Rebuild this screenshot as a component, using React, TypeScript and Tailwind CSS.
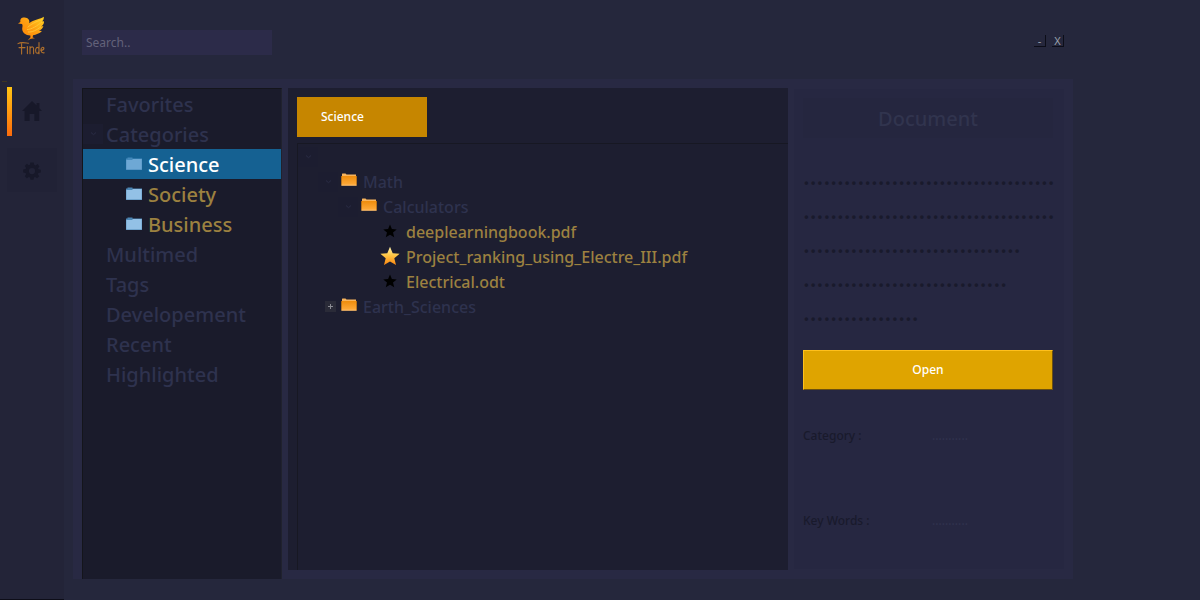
import React from 'react';

type TreeItem = { label: string; child?: boolean; selected?: boolean; open?: boolean };

const categories: TreeItem[] = [
  { label: 'Favorites' },
  { label: 'Categories', open: true },
  { label: 'Science', child: true, selected: true },
  { label: 'Society', child: true },
  { label: 'Business', child: true },
  { label: 'Multimed' },
  { label: 'Tags' },
  { label: 'Developement' },
  { label: 'Recent' },
  { label: 'Highlighted' },
];

const summaryDots = [37, 37, 32, 30, 17];

function Logo() {
  return (
    <svg viewBox="0 0 30 42" className="h-[42px] w-[30px]" role="img" aria-label="Finde">
      <defs>
        <linearGradient id="bird" x1="0" y1="1" x2="1" y2="0">
          <stop offset="0" stopColor="#ff7a00" />
          <stop offset="0.55" stopColor="#fea012" />
          <stop offset="1" stopColor="#ffd21f" />
        </linearGradient>
      </defs>
      <path
        fill="url(#bird)"
        d="M1 8.4 3.4 7C2.8 3.6 5 2.4 7.6 2.6 11 2.8 13 5 12.2 8.2 14.4 6.4 17 5.2 20 4.4 23 3.8 25.4 3 26.8 1.8 27 3.6 26.4 5.4 25 6.6L27 6.2C27.2 8.6 26 10.4 24.2 11.4L26.4 11C25.6 13.6 24 15 22 15.8L25 16C22.6 18.6 19 19.6 16 20.2L15.6 22.4 18 23.2 13.6 23.8 10.6 25.4 13.4 22.6 13.4 20.4C8.6 20.2 5 17.4 5.2 13.4 5.4 11.6 6 10.4 5 9Z"
      />
      <path
        fill="none"
        stroke="#ffcb3e"
        strokeWidth="0.8"
        d="M10 14.6C15 14.2 20 11 25.4 6.6M11 17C15 17.4 20 15 24 11.6M10.6 12.4C14 9.2 18 7.2 25 4.4"
      />
      <g fill="none" stroke="#b0702c" strokeWidth="1.1" strokeLinecap="round" strokeLinejoin="round">
        <path d="M1 28.6C4 26.8 8 27.8 11.6 28.2M4.6 28V39M2 32.6H8" />
        <path d="M10.4 31.6V38.6" />
        <path d="M13 38.8V31.6M13 33.4C15 30.8 16.8 31.8 16.6 34.4V38.8" />
        <path d="M22 27.6V38.8M22 33.4C19.8 31 18.4 33.4 18.6 35.8 18.8 39 21 39 22 36.4" />
        <path d="M23.8 35.6C28.2 34.8 27.2 31.6 25.2 32.4 23 33.8 23.6 38.4 27.2 37.8" />
      </g>
    </svg>
  );
}

function HomeIcon() {
  return (
    <svg viewBox="0 0 20 20" className="size-5" aria-hidden="true">
      <path fill="#171829" d="M10 0 0 10H2.6V20H7.6V13H12.4V20H17.2V10H20L17.4 7.2V2H14.6V4.5Z" />
    </svg>
  );
}

function GearIcon() {
  return (
    <svg viewBox="0 0 20 20" className="size-5" aria-hidden="true">
      <path
        fill="#171829"
        fillRule="evenodd"
        d="M8.3 1.4H11.7L12.2 3.8 13.5 4.4 15.6 3.1 17.4 5.4 16 7.2 16.4 8.3 18.8 8.8V11.6L16.4 12 15.8 13.3 17.2 15.3 15.1 17.3 13.2 15.9 12 16.4 11.5 18.7H8.5L8 16.4 6.8 15.9 4.8 17.3 2.8 15.2 4.1 13.2 3.6 12 1.2 11.6V8.6L3.6 8.1 4.1 6.9 2.8 4.9 4.9 2.8 6.8 4.2 7.9 3.7ZM10 7A3.1 3.1 0 1 0 10 13.2 3.1 3.1 0 0 0 10 7Z"
      />
    </svg>
  );
}

function BlueFolder({ dim }: { dim?: boolean }) {
  return (
    <svg viewBox="0 0 16 13" className="mr-1.5 mb-0.5 h-[13px] w-4 shrink-0" aria-hidden="true">
      <path fill={dim ? '#4489bb' : '#4c86b4'} d="M0 1.5H1.5V0.5H6.5V1.5H16V13H0Z" />
      <path fill={dim ? '#6ea8d5' : '#93c1e6'} d="M0.3 3H6L7 2H15.7V12.5H0.3Z" />
    </svg>
  );
}

function OrangeFolder() {
  return (
    <svg viewBox="0 0 16 13" className="mr-1.5 mb-1 h-[13px] w-4 shrink-0" aria-hidden="true">
      <defs>
        <linearGradient id="folder" x1="0" y1="0" x2="0" y2="1">
          <stop offset="0" stopColor="#ee8c0c" />
          <stop offset="1" stopColor="#ffac3e" />
        </linearGradient>
      </defs>
      <path fill="#f8b45c" d="M1 1Q1 0.5 1.5 0.5H4.5L5.5 1.5H15V4H1Z" />
      <rect x="0.3" y="3" width="15.4" height="9.6" rx="0.6" fill="url(#folder)" />
      <path stroke="#ffc274" strokeWidth="0.9" d="M0.5 12.2H15.5" />
      <path stroke="#b96f10" strokeWidth="0.5" d="M0.3 3V12M15.7 3V12" />
    </svg>
  );
}

function Star({ lit }: { lit?: boolean }) {
  return (
    <span className="mr-1.5 flex w-5 shrink-0 justify-center">
      <svg
        viewBox="0 0 20 20"
        className={lit ? 'mb-0.5 size-5' : 'mb-0.5 size-[14px]'}
        aria-hidden="true"
      >
        <defs>
          <linearGradient id="star" x1="0" y1="0" x2="0" y2="1">
            <stop offset="0" stopColor="#fff3b0" />
            <stop offset="0.45" stopColor="#ffc847" />
            <stop offset="1" stopColor="#fb850f" />
          </linearGradient>
        </defs>
        <path
          fill={lit ? 'url(#star)' : '#000000'}
          d="M10 0.8 12.7 7.2 19.6 7.8 14.3 12.3 16 19.1 10 15.4 4 19.1 5.7 12.3 0.4 7.8 7.3 7.2Z"
        />
      </svg>
    </span>
  );
}

function Chevron() {
  return (
    <svg viewBox="0 0 20 20" className="size-5 shrink-0" aria-hidden="true">
      <rect width="20" height="20" fill="#1c1d30" />
      <path d="M8 8.5 10.5 10.7 13 8.5" fill="none" stroke="#2a2c45" strokeWidth="1" />
    </svg>
  );
}

function Plus() {
  return (
    <span className="flex size-5 shrink-0 items-center justify-end pr-0.5">
      <svg viewBox="0 0 11 11" className="size-[11px]" aria-hidden="true">
        <rect width="11" height="11" fill="#2a2b38" />
        <path d="M3 5.5H8M5.5 3V8" stroke="#8a8b92" strokeWidth="1" />
      </svg>
    </span>
  );
}

function FolderRow({ label, open }: { label: string; open?: boolean }) {
  return (
    <button type="button" className="flex h-[25px] w-full items-center text-[#2e324e]">
      {open ? <Chevron /> : <Plus />}
      <span className="w-[3px]" />
      <OrangeFolder />
      {label}
    </button>
  );
}

function FileRow({ label, lit }: { label: string; lit?: boolean }) {
  return (
    <button type="button" className="flex h-[25px] w-full items-center text-[#9c8140]">
      <Star lit={lit} />
      {label}
    </button>
  );
}

export default function App() {
  return (
    <div className="flex min-h-screen bg-[#25273c] font-['Noto_Sans',sans-serif] text-xs">
      <nav className="flex w-16 shrink-0 flex-col items-center border-b border-[#0d0d18] bg-[#232438]">
        <div className="flex h-[81px] w-full justify-center pt-[15px]">
          <Logo />
        </div>
        <div className="ml-0.5 h-px w-[5px] self-start bg-[#3d3423]" />
        <button
          type="button"
          aria-label="Home"
          className="mt-[5px] flex h-[49px] w-[50px] items-center"
        >
          <span className="h-full w-[5px] bg-linear-to-b from-[#ffc414] to-[#fb6a0c]" />
          <span className="mb-0.5 ml-2.5">
            <HomeIcon />
          </span>
        </button>
        <button
          type="button"
          aria-label="Settings"
          className="mt-3 flex h-11 w-[50px] items-center justify-center bg-[#212236] pt-0.5"
        >
          <GearIcon />
        </button>
      </nav>

      <div className="flex max-w-[1009px] min-w-0 flex-1 flex-col pb-[21px] pl-[9px]">
        <header className="flex h-[79px] items-start justify-between pr-[9px] pl-[9px]">
          <input
            type="search"
            aria-label="Search"
            placeholder="Search.."
            className="mt-[30px] h-[25px] w-[190px] bg-[#2c2b49] px-1 text-[#8b8a9c] outline-none placeholder:text-[#63627a]"
          />
          <div className="mt-[35px] flex gap-1.5 text-[11px] leading-none text-[#9aa0aa]">
            <button
              type="button"
              aria-label="Minimize"
              className="flex size-3 items-center justify-center border-r border-b border-[#0c0d18]"
            >
              -
            </button>
            <button
              type="button"
              aria-label="Close"
              className="flex size-3 items-center justify-center border-r border-b border-[#0c0d18]"
            >
              X
            </button>
          </div>
        </header>

        <main className="flex flex-1 bg-[#282943] pt-[9px] pl-[9px]">
          <aside className="w-[200px] shrink-0 border border-b-0 border-t-[#14151b] border-r-[#20222e] border-l-[#14151b] bg-[#1a1b2b] text-xl font-medium">
            {categories.map((item) => (
              <button
                type="button"
                key={item.label}
                className={
                  'flex h-[30px] w-full items-center ' +
                  (item.selected
                    ? 'bg-[#156192] text-white'
                    : item.child
                      ? 'text-[#9c8140]'
                      : 'text-[#2e324e]')
                }
              >
                {item.child ? (
                  <>
                    <span className="w-[43px]" />
                    <BlueFolder dim={item.selected} />
                  </>
                ) : (
                  <span className="w-[23px]">{item.open && <Chevron />}</span>
                )}
                <span className="pt-0.5">{item.label}</span>
              </button>
            ))}
          </aside>

          <section className="mr-1.5 mb-[9px] ml-1.5 flex min-w-0 flex-1 flex-col bg-[#1d1e30] pt-[9px] pl-[9px]">
            <button
              type="button"
              className="h-10 w-[130px] bg-[#c68600] pl-6 text-left font-medium text-white"
            >
              Science
            </button>
            <div className="mt-1.5 flex-1 border-t border-l border-[#171823] text-base font-medium">
              <div className="flex h-[25px] items-center">
                <Chevron />
              </div>
              <div className="pl-5">
                <FolderRow label="Math" open />
                <div className="pl-5">
                  <FolderRow label="Calculators" open />
                  <div className="pl-[42px]">
                    <FileRow label="deeplearningbook.pdf" />
                    <FileRow label="Project_ranking_using_Electre_III.pdf" lit />
                    <FileRow label="Electrical.odt" />
                  </div>
                </div>
                <FolderRow label="Earth_Sciences" />
              </div>
            </div>
          </section>

          <section className="mt-px mr-[9px] mb-2.5 w-[270px] shrink-0 bg-[#262741] px-[9px] pt-[9px] font-medium text-[#191a2c]">
            <h2 className="flex h-10 w-[250px] items-center justify-center bg-[#25263f] pt-0.5 text-xl text-[#31344e]">
              Document
            </h2>
            <div className="mt-5 text-[25px] leading-[34px]">
              {summaryDots.map((count, i) => (
                <p key={i} className="whitespace-nowrap">
                  {'.'.repeat(count)}
                </p>
              ))}
            </div>
            <button
              type="button"
              className="mt-[22px] flex h-10 w-[250px] items-center justify-center border border-t-[#ffc01c] border-r-[#6b5010] border-b-[#6b5010] border-l-[#ffc01c] bg-[#dfa400] text-white"
            >
              Open
            </button>
            <dl className="mt-[37px] grid grid-cols-[129px_1fr] gap-y-[67px] leading-[18px]">
              <dt>Category :</dt>
              <dd className="text-[#30324d]">...........</dd>
              <dt>Key Words :</dt>
              <dd className="text-[#30324d]">...........</dd>
            </dl>
          </section>
        </main>
      </div>
    </div>
  );
}
